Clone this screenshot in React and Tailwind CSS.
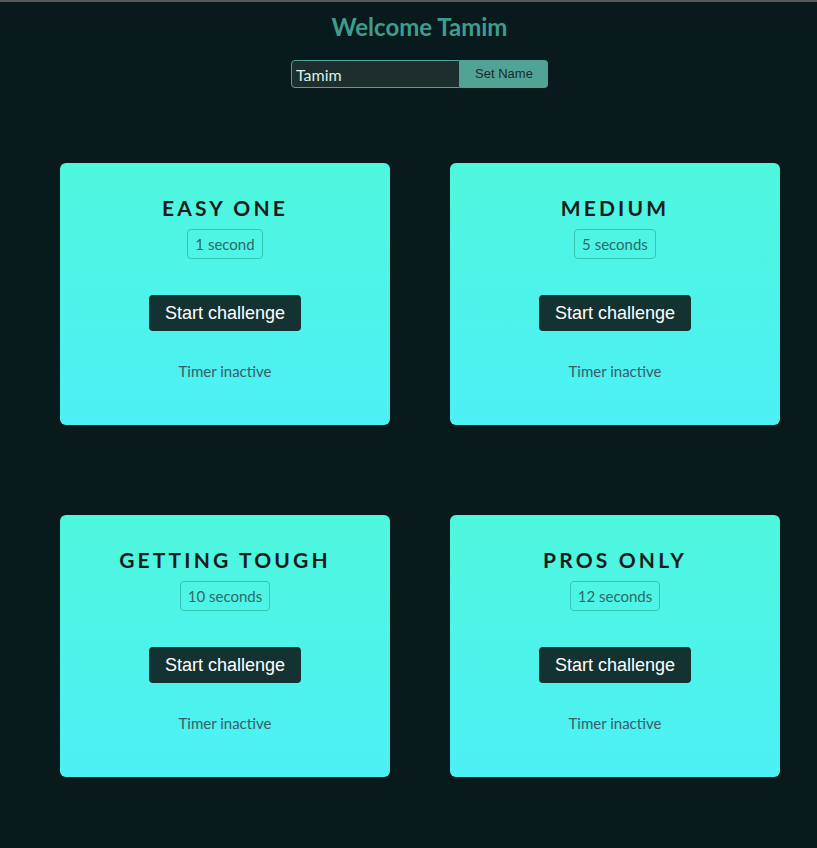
const challenges = [
  { title: 'Easy One', time: '1 second' },
  { title: 'Medium', time: '5 seconds' },
  { title: 'Getting Tough', time: '10 seconds' },
  { title: 'Pros Only', time: '12 seconds' },
]

function ChallengeCard({ title, time }) {
  return (
    <div className="flex h-[262px] flex-col items-center rounded-md bg-gradient-to-b from-[#4ff7dd] to-[#4cf0f5] pt-[33px]">
      <h2 className="text-[21px] font-bold uppercase leading-6 tracking-[0.15em] text-[#1a1d1c]">
        {title}
      </h2>
      <p className="mt-[9px] rounded border border-[#35c6b3] px-[7px] py-1 text-[15px] leading-5 text-[#2d6b66]">
        {time}
      </p>
      <button className="mt-[36px] h-9 rounded bg-[#143231] px-4 font-['Liberation_Sans',sans-serif] text-[18px] text-white">
        Start challenge
      </button>
      <p className="mt-[29px] text-[15px] text-[#3a5d6a]">Timer inactive</p>
    </div>
  )
}

export default function App() {
  return (
    <div className="min-h-[848px] border-t-2 border-[#5a5a5a] bg-[#081a1c] font-['Lato',sans-serif]">
      <header className="flex flex-col items-center pt-[11px] pl-[22px]">
        <h1 className="text-[24px] font-bold leading-7 text-[#3f9c8c]">Welcome Tamim</h1>
        <form className="mt-[19px] flex" onSubmit={(e) => e.preventDefault()}>
          <input
            defaultValue="Tamim"
            className="h-[28px] w-[169px] rounded-l-sm border border-[#4aa598] bg-[#1c2f2d] px-1 text-[16px] text-[#d8f0ec] outline-none"
          />
          <button className="h-[28px] w-[88px] rounded-r-sm bg-[#51a396] font-['Liberation_Sans',sans-serif] text-[13px] text-[#1b2a28]">
            Set Name
          </button>
        </form>
      </header>
      <main className="grid grid-cols-2 gap-x-[60px] gap-y-[90px] px-[60px] pt-[75px] pb-[70px] pr-[37px]">
        {challenges.map((c) => (
          <ChallengeCard key={c.title} {...c} />
        ))}
      </main>
    </div>
  )
}
